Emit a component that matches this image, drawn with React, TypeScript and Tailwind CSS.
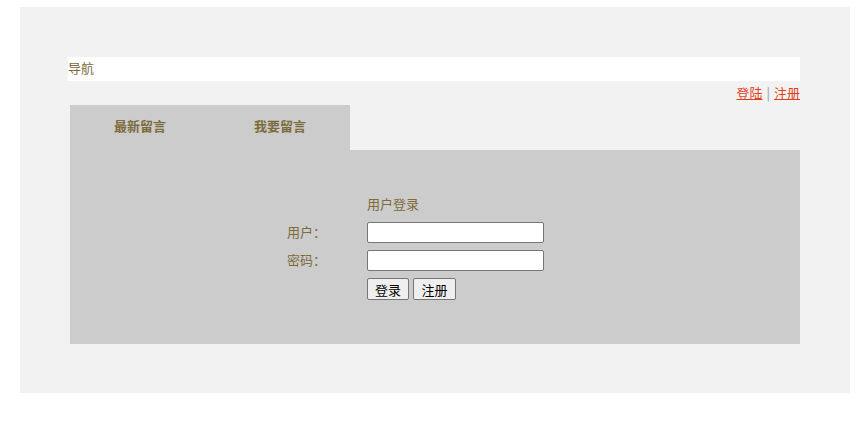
import React from 'react';

const TEXT = 'text-[#7b6b3b]';

export default function App() {
  return (
    <div className="w-[866px] h-[425px] bg-white pt-[7px] pl-[20px] font-['Noto_Sans_CJK_SC','Microsoft_YaHei',sans-serif] text-[13px]">
      <div className="w-[830px] h-[386px] bg-[#f2f2f2] pt-[50px] pl-[48px] pr-[50px]">
        {/* Nav */}
        <div className={`h-[24px] bg-white flex items-center pb-[2px] ${TEXT}`}>导航</div>

        {/* Login / register links */}
        <div className="h-[24px] flex items-center justify-end pb-[1px] text-[13px]">
          <a href="#" className="text-[#e0401b] underline">登陆</a>
          <span className="text-[#999] mx-[4px]">|</span>
          <a href="#" className="text-[#e0401b] underline">注册</a>
        </div>

        <div className="ml-[2px]">
          {/* Tabs */}
          <div className="flex h-[45px]">
            <div className={`w-[140px] bg-[#cccccc] flex items-center justify-center pb-[3px] font-bold ${TEXT}`}>
              最新留言
            </div>
            <div className={`w-[140px] bg-[#cccccc] flex items-center justify-center pb-[3px] font-bold ${TEXT}`}>
              我要留言
            </div>
          </div>

          {/* Panel */}
          <div className="h-[194px] bg-[#cccccc] pt-[45px]">
            <div className="grid grid-cols-[297px_auto] gap-y-[7px] items-center">
              <div />
              <div className={`h-[20px] flex items-center pb-[2px] ${TEXT}`}>用户登录</div>

              <div className={`h-[21px] flex items-center justify-end pr-[41px] pb-[2px] ${TEXT}`}>用户：</div>
              <input className="w-[177px] h-[21px] bg-white border border-[#767676] rounded-[2px] outline-none" />

              <div className={`h-[21px] flex items-center justify-end pr-[41px] pb-[2px] ${TEXT}`}>密码：</div>
              <input
                type="password"
                className="w-[177px] h-[21px] bg-white border border-[#767676] rounded-[2px] outline-none"
              />

              <div />
              <div className="flex gap-[4px]">
                <button className="w-[42px] h-[22px] bg-[#efefef] border border-[#767676] rounded-[2px] text-[13px] text-black leading-none">
                  登录
                </button>
                <button className="w-[43px] h-[22px] bg-[#efefef] border border-[#767676] rounded-[2px] text-[13px] text-black leading-none">
                  注册
                </button>
              </div>
            </div>
          </div>
        </div>
      </div>
    </div>
  );
}
